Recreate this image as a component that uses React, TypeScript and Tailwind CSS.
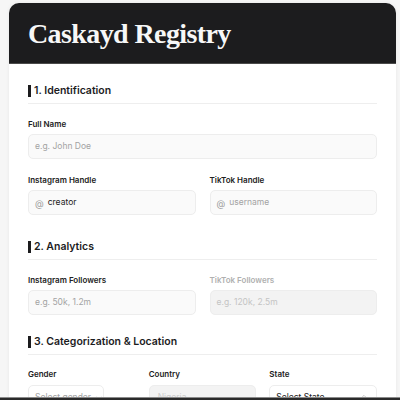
import React from 'react'
import { ChevronDown, ChevronsUpDown } from 'lucide-react'

const FONT = { fontFamily: 'Inter, "Noto Sans", sans-serif' }

function SectionTitle({ title }: { title: string }): React.ReactElement {
  return (
    <div className="flex items-center h-[20px]">
      <div className="w-[3px] h-[12px] bg-[#1c1c1e]" />
      <span className="ml-[3px] text-[10.5px] font-semibold text-[#1c1c1e] leading-[20px]">{title}</span>
    </div>
  )
}

function Label({ text, muted }: { text: string; muted?: boolean }): React.ReactElement {
  return (
    <div className={`h-[14px] leading-[14px] text-[8px] font-semibold ${muted ? 'text-[#b0b0b0]' : 'text-[#222222]'}`}>
      {text}
    </div>
  )
}

function Field({ placeholder, value, at, disabled }: { placeholder: string; value?: string; at?: boolean; disabled?: boolean }): React.ReactElement {
  return (
    <div
      className={`mt-[3px] h-[25px] rounded-[5px] border border-[#ededed] flex items-center pl-[6px] text-[8.5px] ${
        disabled ? 'bg-[#f3f3f3]' : 'bg-[#fafafa]'
      }`}
    >
      {at && <span className="text-[#9a9a9a] text-[9px] mt-[2px] mr-[4px]">@</span>}
      {value ? (
        <span className="text-[#222222]">{value}</span>
      ) : (
        <span className={disabled ? 'text-[#c4c4c4]' : 'text-[#a3a3a3]'}>{placeholder}</span>
      )}
    </div>
  )
}

export default function App(): React.ReactElement {
  return (
    <div className="w-[400px] h-[400px] overflow-hidden bg-[#f6f6f6] relative" style={FONT}>
      <div className="ml-[9px] mt-[3px] w-[387px] bg-white rounded-t-[10px] shadow-[0_0_4px_rgba(0,0,0,0.06)]">
        <div className="h-[61px] bg-[#1c1c1e] rounded-t-[10px] border-b border-[#4a4a4a] flex items-center pl-[19px]">
          <h1
            className="text-[28px] font-bold text-[#f7f7f7] tracking-[-0.6px] leading-none mt-[1px]"
            style={{ fontFamily: '"Liberation Serif", "DejaVu Serif", serif' }}
          >
            Caskayd Registry
          </h1>
        </div>

        <div className="px-[19px] pt-[17px] pb-[40px]">
          <div className="pb-[2px] border-b border-[#eeeeee]">
            <SectionTitle title="1. Identification" />
          </div>

          <div className="mt-[13px]">
            <Label text="Full Name" />
            <Field placeholder="e.g. John Doe" />
          </div>

          <div className="mt-[14px] grid grid-cols-2 gap-[14px]">
            <div>
              <Label text="Instagram Handle" />
              <Field placeholder="creator" value="creator" at />
            </div>
            <div>
              <Label text="TikTok Handle" />
              <Field placeholder="username" at />
            </div>
          </div>

          <div className="mt-[22px] pb-[2px] border-b border-[#eeeeee]">
            <SectionTitle title="2. Analytics" />
          </div>

          <div className="mt-[13px] grid grid-cols-2 gap-[14px]">
            <div>
              <Label text="Instagram Followers" />
              <Field placeholder="e.g. 50k, 1.2m" />
            </div>
            <div>
              <Label text="TikTok Followers" muted />
              <Field placeholder="e.g. 120k, 2.5m" disabled />
            </div>
          </div>

          <div className="mt-[17px] pb-[2px] border-b border-[#eeeeee]">
            <SectionTitle title="3. Categorization & Location" />
          </div>

          <div className="mt-[12px] grid grid-cols-3 gap-[13px]">
            <div>
              <Label text="Gender" />
              <div className="mt-[4px] h-[25px] w-[76px] rounded-[5px] border border-[#ededed] bg-white flex items-center pl-[6px] text-[8.5px] text-[#a3a3a3]">
                Select gender
                <ChevronDown className="ml-[4px] w-[8px] h-[8px] text-[#a3a3a3]" strokeWidth={1.5} />
              </div>
            </div>
            <div>
              <Label text="Country" />
              <div className="mt-[4px] h-[25px] rounded-[5px] border border-[#ededed] bg-[#f3f3f3] flex items-center pl-[8px] text-[8.5px] text-[#cccccc]">
                Nigeria
              </div>
            </div>
            <div>
              <Label text="State" />
              <div className="mt-[4px] h-[25px] rounded-[5px] border border-[#ededed] bg-white flex items-center justify-between pl-[6px] pr-[8px] text-[8.5px] text-[#222222]">
                Select State
                <ChevronsUpDown className="w-[8px] h-[8px] text-[#9a9a9a]" strokeWidth={1.5} />
              </div>
            </div>
          </div>
        </div>
      </div>
      <div className="fixed left-0 right-0 bottom-0 h-[3px] bg-[#2a2a2a] border-t border-[#8a8a8a]" />
    </div>
  )
}
